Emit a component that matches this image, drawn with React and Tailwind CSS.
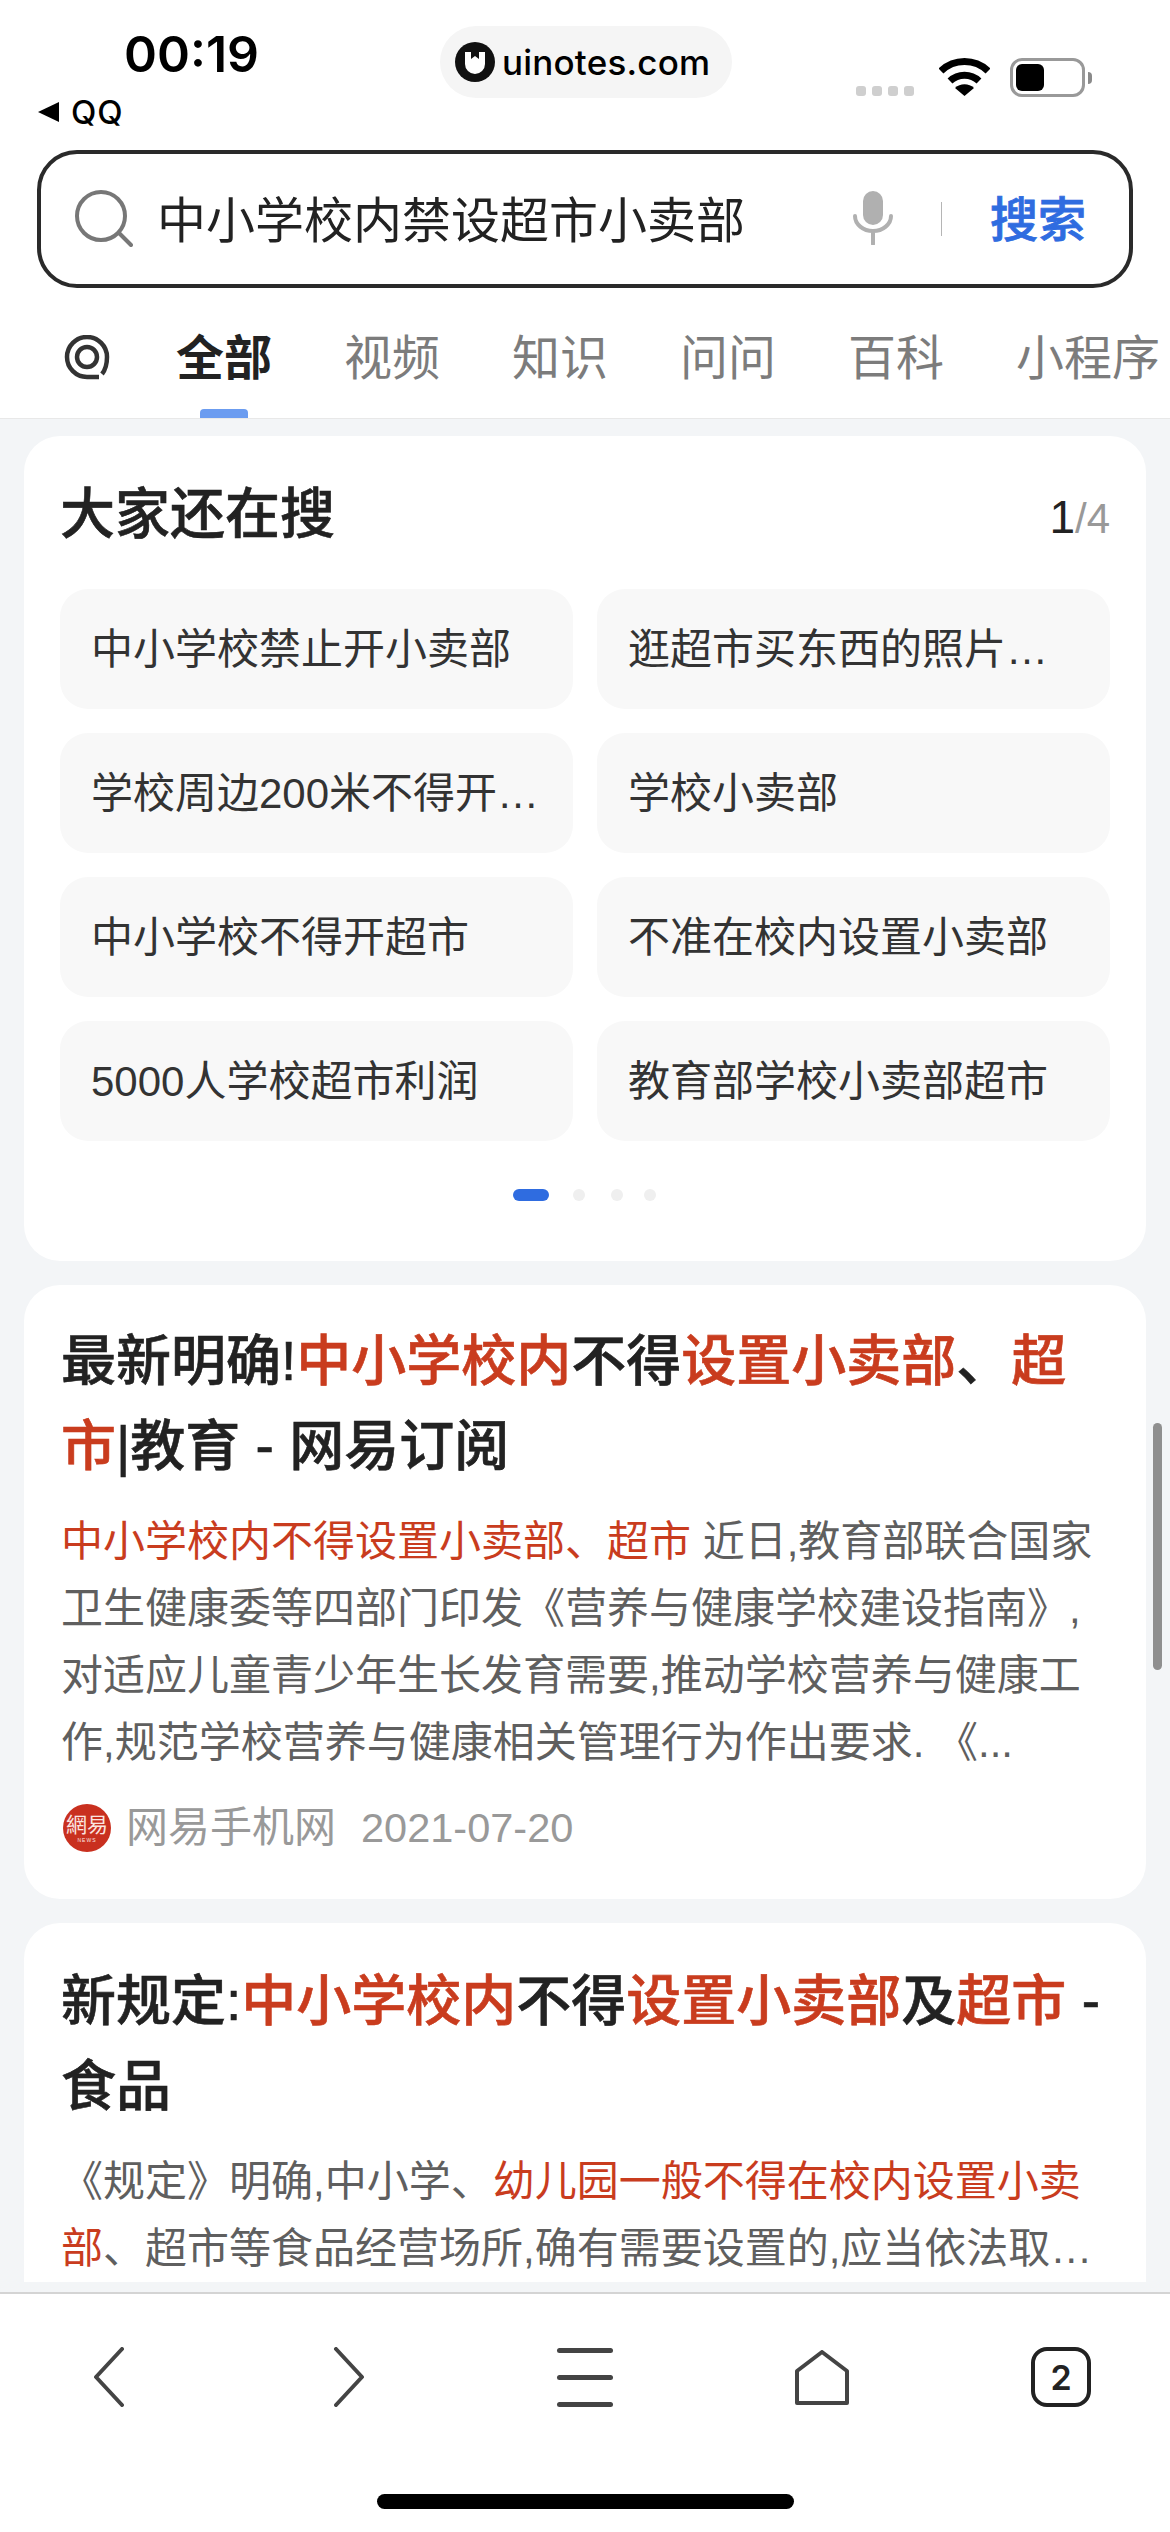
import React from "react";

const chips = [
  "中小学校禁止开小卖部",
  "逛超市买东西的照片大全",
  "学校周边200米不得开小卖部",
  "学校小卖部",
  "中小学校不得开超市",
  "不准在校内设置小卖部",
  "5000人学校超市利润",
  "教育部学校小卖部超市",
];

const tabs = ["视频", "知识", "问问", "百科", "小程序"];

const Red = ({ children }) => <span className="text-[#c93c1e]">{children}</span>;

const StatusBar = () => (
  <div className="flex h-[150px] shrink-0 items-start font-['Inter']">
    <div className="w-[440px] shrink-0 pl-[38px]">
      <div className="mt-[24px] pl-[86px] text-[50px] leading-[60px] font-semibold text-black">00:19</div>
      <div className="mt-[11px] flex items-center gap-[12px] text-[33px] leading-[34px] font-medium tracking-[1px] text-black">
        <span className="h-0 w-0 border-y-[10px] border-r-[21px] border-y-transparent border-r-black" />
        <span>QQ</span>
      </div>
    </div>
    <div className="mt-[26px] flex h-[72px] w-[292px] shrink-0 items-center gap-[7px] rounded-[36px] bg-[#f5f5f5] pl-[15px]">
      <svg width="40" height="40" viewBox="0 0 40 40">
        <circle cx="20" cy="20" r="20" fill="#111" />
        <path d="M10 10 h6 v7 l4 -3 l4 3 v-7 h6 v12 a10 10 0 0 1 -20 0 Z" fill="#fff" />
      </svg>
      <span className="text-[35px] leading-[40px] font-medium tracking-[0.2px] text-black">uinotes.com</span>
    </div>
    <div className="mt-[58px] flex items-end pl-[124px]">
      <div className="mb-[1px] flex gap-[6px]">
        <i className="h-[10px] w-[10px] rounded-[3px] bg-[#cfcfcf]" />
        <i className="h-[10px] w-[10px] rounded-[3px] bg-[#cfcfcf]" />
        <i className="h-[10px] w-[10px] rounded-[3px] bg-[#cfcfcf]" />
        <i className="h-[10px] w-[10px] rounded-[3px] bg-[#cfcfcf]" />
      </div>
      <svg className="mb-[1px] ml-[25px]" width="51" height="38" viewBox="0 0 51 38" fill="none" stroke="#000" strokeWidth="7">
        <path d="M2 13 a34 34 0 0 1 47 0" />
        <path d="M11 23 a21 21 0 0 1 29 0" />
        <path d="M25.5 38 L16 30 a14 14 0 0 1 19 0 Z" fill="#000" stroke="none" />
      </svg>
      <div className="ml-[20px] flex items-center">
        <div className="h-[39px] w-[75px] rounded-[12px] border-[3px] border-[#999] p-[3px]">
          <div className="h-full w-[28px] rounded-[6px] bg-black" />
        </div>
        <div className="ml-[3px] h-[12px] w-[4px] rounded-r-full bg-[#8a8a8a]" />
      </div>
    </div>
  </div>
);

const SearchBox = () => (
  <div className="mx-[37px] flex h-[138px] shrink-0 items-center rounded-[40px] border-[4px] border-[#2a2a2a]">
    <svg className="ml-[34px] shrink-0" width="58" height="58" viewBox="0 0 58 58" fill="none" stroke="#777" strokeWidth="4" strokeLinecap="round">
      <circle cx="26" cy="26" r="24" />
      <path d="M44 43 L56 55" />
    </svg>
    <span className="mt-[3px] ml-[24px] w-[696px] shrink-0 text-[49px] leading-[60px] text-[#222]">中小学校内禁设超市小卖部</span>
    <svg className="mt-[-2px] shrink-0" width="40" height="54" viewBox="0 0 40 54" fill="none">
      <rect x="10" y="0" width="20" height="34" rx="10" fill="#b0b0b0" />
      <path d="M2 25 a18 15 0 0 0 36 0" stroke="#b0b0b0" strokeWidth="4" strokeLinecap="round" />
      <path d="M20 42 v11" stroke="#b0b0b0" strokeWidth="4" strokeLinecap="round" />
    </svg>
    <div className="ml-[48px] h-[34px] w-[1px] shrink-0 bg-[#b5b5b5]" />
    <span className="mt-[3px] ml-[48px] text-[48px] leading-[60px] font-medium text-[#2f6ce0] [-webkit-text-stroke:0.8px]">搜索</span>
  </div>
);

const Tabs = () => (
  <div className="flex h-[131px] shrink-0 items-start overflow-hidden border-b border-[#e8e8e8] pt-[43px] pl-[63px]">
    <svg className="mt-[4px] shrink-0" width="48" height="46" viewBox="0 0 48 46" fill="none" stroke="#333" strokeWidth="4.5">
      <path d="M36 42 H24 a20 20 0 1 1 20 -20 c0 6 -1 12 -5 17" />
      <circle cx="24" cy="22" r="10" />
    </svg>
    <div className="ml-[65px] flex w-[96px] shrink-0 flex-col items-center">
      <span className="text-[48px] leading-[56px] font-bold text-[#222]">全部</span>
      <span className="mt-[22px] h-[9px] w-[48px] rounded-t-[4px] bg-[#6b9cf0]" />
    </div>
    <div className="ml-[72px] flex shrink-0 gap-[72px] text-[48px] leading-[56px] text-[#7c7c7c]">
      {tabs.map((t) => (
        <span key={t} className="shrink-0">{t}</span>
      ))}
    </div>
  </div>
);

const Related = () => (
  <section className="h-[825px] shrink-0 rounded-[36px] bg-white px-[36px] pt-[42px]">
    <div className="flex items-baseline justify-between">
      <h2 className="text-[55px] leading-[72px] font-medium text-[#222] [-webkit-text-stroke:0.6px]">大家还在搜</h2>
      <span className="text-[42px] leading-[40px] text-[#999]">
        <span className="text-[46px] text-[#222]">1</span>/4
      </span>
    </div>
    <div className="mt-[39px] grid grid-cols-2 gap-x-[24px] gap-y-[24px]">
      {chips.map((c) => (
        <div key={c} className="flex h-[120px] min-w-0 items-center rounded-[28px] bg-[#f8f8f8] px-[31px] text-[42px] text-[#333]">
          <span className="truncate">{c}</span>
        </div>
      ))}
    </div>
    <div className="mt-[48px] flex items-center pl-[453px]">
      <span className="h-[12px] w-[36px] rounded-full bg-[#2f6ce0]" />
      <span className="ml-[24px] h-[12px] w-[12px] rounded-full bg-[#efefef]" />
      <span className="ml-[26px] h-[12px] w-[12px] rounded-full bg-[#efefef]" />
      <span className="ml-[21px] h-[12px] w-[12px] rounded-full bg-[#efefef]" />
    </div>
  </section>
);

const FirstResult = () => (
  <article className="h-[614px] shrink-0 rounded-[36px] bg-white px-[37px] pt-[34px]">
    <h3 className="text-[55px] leading-[85px] font-medium text-[#222] [-webkit-text-stroke:0.6px]">
      最新明确!<Red>中小学校内</Red>不得<Red>设置小卖部</Red>、<Red>超市</Red>|教育 - 网易订阅
    </h3>
    <p className="mt-[19px] text-[42px] leading-[67px] text-[#5f5f5f]">
      <Red>中小学校内不得设置小卖部、超市</Red> 近日,教育部联合国家卫生健康委等四部门印发《营养与健康学校建设指南》,对适应儿童青少年生长发育需要,推动学校营养与健康工作,规范学校营养与健康相关管理行为作出要求. 《...
    </p>
    <div className="mt-[24px] flex items-center pl-[2px]">
      <div className="flex h-[48px] w-[48px] shrink-0 flex-col items-center justify-center overflow-hidden rounded-full bg-[#c9301f] text-[#fbe5e0]">
        <span className="text-[21px] leading-[24px] whitespace-nowrap">網易</span>
        <span className="text-[5px] leading-[6px] tracking-[1px]">NEWS</span>
      </div>
      <span className="ml-[15px] text-[42px] leading-[56px] text-[#999]">网易手机网</span>
      <span className="ml-[25px] text-[41.5px] leading-[56px] text-[#999]">2021-07-20</span>
    </div>
  </article>
);

const SecondResult = () => (
  <article className="shrink-0 rounded-t-[36px] bg-white px-[37px] pt-[36px]">
    <h3 className="text-[55px] leading-[85px] font-medium text-[#222] [-webkit-text-stroke:0.6px]">
      新规定:<Red>中小学校内</Red>不得<Red>设置小卖部</Red>及<Red>超市</Red> - 食品
    </h3>
    <p className="mt-[19px] line-clamp-2 text-[42px] leading-[67px] text-[#5f5f5f]">
      《规定》明确,中小学、<Red>幼儿园一般不得在校内设置小卖部</Red>、超市等食品经营场所,确有需要设置的,应当依法取得许可
    </p>
  </article>
);

const BottomBar = () => (
  <nav className="relative flex h-[240px] shrink-0 flex-col border-t-[2px] border-[#d4d4d4] bg-white">
    <div className="mt-[52px] flex h-[62px] items-center pl-[93px] text-[#444]">
      <svg width="32" height="60" viewBox="0 0 32 60" fill="none" stroke="currentColor" strokeWidth="4" strokeLinecap="round" strokeLinejoin="round">
        <path d="M29 2 L3 30 L29 58" />
      </svg>
      <svg className="ml-[208px]" width="32" height="60" viewBox="0 0 32 60" fill="none" stroke="currentColor" strokeWidth="4" strokeLinecap="round" strokeLinejoin="round">
        <path d="M3 2 L29 30 L3 58" />
      </svg>
      <div className="ml-[192px] flex flex-col gap-[22px]">
        <i className="h-[5px] w-[56px] rounded-full bg-current" />
        <i className="h-[5px] w-[56px] rounded-full bg-current" />
        <i className="h-[5px] w-[56px] rounded-full bg-current" />
      </div>
      <svg className="ml-[182px]" width="54" height="55" viewBox="0 0 54 55" fill="none" stroke="currentColor" strokeWidth="4" strokeLinejoin="round">
        <path d="M27 2 L52 21 V53 H2 V21 Z" />
      </svg>
      <div className="ml-[182px] flex h-[60px] w-[60px] items-center justify-center rounded-[16px] border-[4px] border-current font-['Inter'] text-[34px] font-semibold text-[#222]">2</div>
    </div>
    <div className="mx-auto mt-[86px] h-[15px] w-[417px] rounded-full bg-black" />
  </nav>
);

export default function App() {
  return (
    <div className="relative flex h-[2532px] w-[1170px] flex-col overflow-hidden bg-white font-['Liberation_Sans','Noto_Sans_CJK_SC',sans-serif]">
      <StatusBar />
      <SearchBox />
      <Tabs />
      <main className="flex min-h-0 flex-1 flex-col gap-[24px] overflow-hidden bg-[#f3f5f7] px-[24px] pt-[17px]">
        <Related />
        <FirstResult />
        <SecondResult />
      </main>
      <BottomBar />
      <div className="absolute top-[1423px] right-[8px] h-[247px] w-[9px] rounded-full bg-[#8f8f8f]" />
    </div>
  );
}
